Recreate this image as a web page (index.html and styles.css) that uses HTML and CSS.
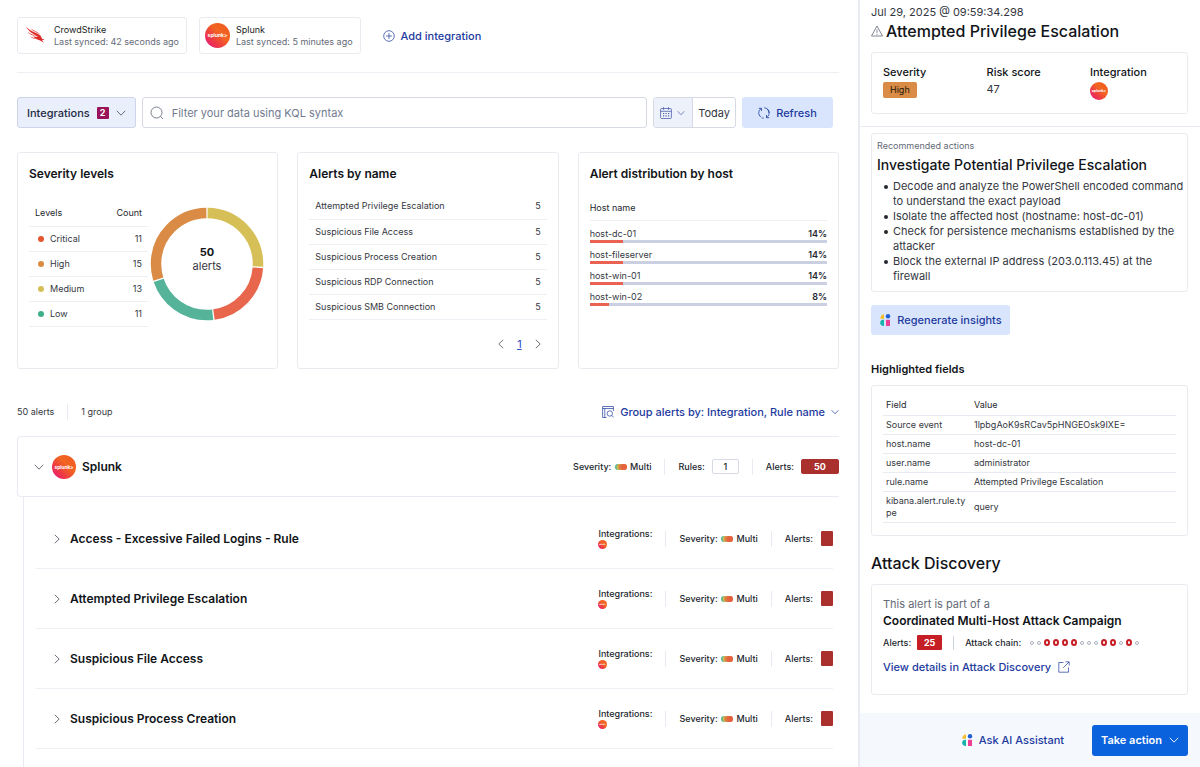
FILE: index.html
```html
<!DOCTYPE html>
<html lang="en">
<head>
<meta charset="utf-8">
<title>Alert summary</title>
<link rel="stylesheet" href="styles.css">
</head>
<body>
<svg class="defs" aria-hidden="true">
  <defs>
    <linearGradient id="splunk-fill" x1="0" y1="1" x2="1" y2="0">
      <stop offset="0" stop-color="#e6128a"/>
      <stop offset="0.32" stop-color="#ee3a44"/>
      <stop offset="0.6" stop-color="#f26522"/>
      <stop offset="1" stop-color="#f0571f"/>
    </linearGradient>
    <symbol id="splunk" viewBox="0 0 24 24">
      <circle cx="12" cy="12" r="12" fill="url(#splunk-fill)"/>
      <text x="12" y="13.500" text-anchor="middle" font-size="4.800" font-weight="700" fill="#fff">splunk&gt;</text>
    </symbol>
    <symbol id="multi" viewBox="0 0 12 6">
      <circle cx="3" cy="3" r="3" fill="#4fb697"/>
      <circle cx="4.500" cy="3" r="3" fill="#d3b654"/>
      <rect x="3.500" y="0" width="8.500" height="6" rx="3" fill="#dd7a42"/>
      <circle cx="9" cy="3" r="3" fill="#e5633f"/>
    </symbol>
    <symbol id="down" viewBox="0 0 10 10"><path d="M.8 2.800 5 7.200 9.200 2.800" fill="none" stroke="currentColor" stroke-width=".9"/></symbol>
    <symbol id="right" viewBox="0 0 10 10"><path d="M2.800 .8 7.200 5 2.800 9.200" fill="none" stroke="currentColor" stroke-width=".9"/></symbol>
    <symbol id="left" viewBox="0 0 10 10"><path d="M7.200 .8 2.800 5 7.200 9.200" fill="none" stroke="currentColor" stroke-width=".9"/></symbol>
    <symbol id="assistant" viewBox="0 0 12 14">
      <path d="M5 1.200v4.600H1.300C1.200 3.500 2.700 1.500 5 1.200z" fill="#f3c02c"/>
      <circle cx="9" cy="3.300" r="2.200" fill="#1f5fd6"/>
      <path d="M5 6.800v6.200H4C.2 12.600.2 7.200 4 6.800z" fill="#17b5ac"/>
      <path d="M7 6.800h4V13H7z" fill="#ee3f94"/>
    </symbol>
  </defs>
</svg>

<div class="layout">
  <main class="main">
    <section class="sources">
      <div class="source">
        <svg class="source-icon" viewBox="0 0 25 25"><g fill="#dd2a26"><path d="M3 3.500c2.500 3.600 7.500 5 11.500 7.300 2.400 1.300 3.800 2.200 4.200 4.200.2 1 .8 1.300 2.700 1.600-.7.500-1.500.6-2.400.4l1.800 2.600c-1.700-.8-2.900-1.800-4.300-2.400-3-.9-5.200-1.800-6-4.300 1.500.9 3 1.200 4.500 1.100C11 11 5.500 9.200 3 3.500z"/><path d="M4.500 8.600c2 1.900 4.300 2.800 6.500 3.500l.5.900C9 12.400 6 11.300 4.500 8.600z"/><path d="M7 13c1.300 1.100 2.800 1.600 4.500 1.900l.6.800C10 15.500 8 14.700 7 13z"/><path d="M7.500 5.500c3.500 1.900 7.500 3.200 10 6.300C14.500 10 10 8.500 7.500 5.500z" opacity=".7"/></g></svg>
        <div><div class="source-name">CrowdStrike</div><div class="source-sync">Last synced: 42 seconds ago</div></div>
      </div>
      <div class="source">
        <svg class="source-icon"><use href="#splunk"/></svg>
        <div><div class="source-name">Splunk</div><div class="source-sync">Last synced: 5 minutes ago</div></div>
      </div>
      <a class="link add" href="#add"><svg class="icon-12" viewBox="0 0 12 12" fill="none" stroke="currentColor" stroke-width=".7"><circle cx="6" cy="6" r="5.300"/><path d="M6 3v6M3 6h6"/></svg>Add integration</a>
    </section>

    <section class="filters">
      <button class="filter-button" type="button">Integrations <span class="count">2</span><svg class="icon-10"><use href="#down"/></svg></button>
      <label class="search">
        <svg class="icon-14" viewBox="0 0 14 14" fill="none" stroke="currentColor" stroke-width=".9"><circle cx="6.500" cy="6.500" r="5.500"/><path d="m10.400 10.400 2.600 2.600"/></svg>
        <input type="text" placeholder="Filter your data using KQL syntax" aria-label="Filter your data using KQL syntax">
      </label>
      <div class="dates">
        <button class="calendar" type="button" aria-label="Date range">
          <svg class="icon-12" viewBox="0 0 12 12" fill="none" stroke="currentColor" stroke-width=".8"><rect x=".6" y="1.500" width="10.800" height="10" rx="1"/><path d="M.6 4.300h10.800M3.500.2v2.600M8.500.2v2.600"/><path d="M3 6.500h6.500M3 8.800h6.500" stroke-width="1.200" stroke-dasharray="1.200 1.300"/></svg>
          <svg class="icon-8"><use href="#down"/></svg>
        </button>
        <button class="today" type="button">Today</button>
      </div>
      <button class="soft refresh" type="button"><svg class="icon-12" viewBox="0 0 12 12" fill="none" stroke="currentColor" stroke-width=".8"><path d="M2.800 10C-.2 7.500.2 3.300 3.300 1.500M.8 1.300h2.700V4M6.300.8c3 .2 5 2.500 4.900 5.200M9.200 2C11.800 4.500 11.600 8.500 8.700 10.500M11.200 10.700H8.500V8M5.700 11.200a5 5 0 0 1-2-.5"/></svg>Refresh</button>
    </section>

    <section class="cards">
      <article class="card">
        <h2>Severity levels</h2>
        <div class="severity">
          <table class="levels">
            <thead><tr><th>Levels</th><th>Count</th></tr></thead>
            <tbody>
              <tr><td><span class="dot critical"></span>Critical</td><td>11</td></tr>
              <tr><td><span class="dot high"></span>High</td><td>15</td></tr>
              <tr><td><span class="dot medium"></span>Medium</td><td>13</td></tr>
              <tr><td><span class="dot low"></span>Low</td><td>11</td></tr>
            </tbody>
          </table>
          <svg class="donut" viewBox="0 0 114 114">
            <g fill="none" stroke-width="10.500" transform="rotate(-90 57 57)">
              <circle cx="57" cy="57" r="51" pathLength="100" stroke="#d6bf57" stroke-dasharray="25.600 74.400" stroke-dashoffset="-.2"/>
              <circle cx="57" cy="57" r="51" pathLength="100" stroke="#e7664c" stroke-dasharray="21.600 78.400" stroke-dashoffset="-26.200"/>
              <circle cx="57" cy="57" r="51" pathLength="100" stroke="#54b399" stroke-dasharray="21.600 78.400" stroke-dashoffset="-48.200"/>
              <circle cx="57" cy="57" r="51" pathLength="100" stroke="#da8b45" stroke-dasharray="29.600 70.400" stroke-dashoffset="-70.200"/>
            </g>
            <text x="57" y="49" class="donut-total">50</text>
            <text x="57" y="63" class="donut-label">alerts</text>
          </svg>
        </div>
      </article>

      <article class="card">
        <h2>Alerts by name</h2>
        <table class="names">
          <tr><td>Attempted Privilege Escalation</td><td>5</td></tr>
          <tr><td>Suspicious File Access</td><td>5</td></tr>
          <tr><td>Suspicious Process Creation</td><td>5</td></tr>
          <tr><td>Suspicious RDP Connection</td><td>5</td></tr>
          <tr><td>Suspicious SMB Connection</td><td>5</td></tr>
        </table>
        <nav class="pager">
          <button type="button" aria-label="Previous page"><svg class="icon-10"><use href="#left"/></svg></button>
          <a href="#page-1">1</a>
          <button type="button" aria-label="Next page"><svg class="icon-10"><use href="#right"/></svg></button>
        </nav>
      </article>

      <article class="card">
        <h2>Alert distribution by host</h2>
        <div class="host-head">Host name</div>
        <div class="host"><span>host-dc-01</span><b>14%</b><div class="bar"><div style="width:14%"></div></div></div>
        <div class="host"><span>host-fileserver</span><b>14%</b><div class="bar"><div style="width:14%"></div></div></div>
        <div class="host"><span>host-win-01</span><b>14%</b><div class="bar"><div style="width:14%"></div></div></div>
        <div class="host"><span>host-win-02</span><b>8%</b><div class="bar"><div style="width:8%"></div></div></div>
      </article>
    </section>

    <div class="summary">
      <span>50 alerts</span><span class="rule"></span><span>1 group</span>
      <button class="link group-by" type="button"><svg class="icon-12" viewBox="0 0 12 12" fill="none" stroke="currentColor" stroke-width=".7"><path d="M4.500 11.500H.6V.5h10.800v4.500M.6 2.500h10.800M2.800 2.500v9"/><circle cx="7.800" cy="7.500" r="2.700"/><path d="m9.800 9.500 2 2"/></svg>Group alerts by: Integration, Rule name<svg class="icon-8"><use href="#down"/></svg></button>
    </div>

    <section class="group">
      <header class="group-head">
        <svg class="icon-10"><use href="#down"/></svg>
        <svg class="group-icon"><use href="#splunk"/></svg>
        <h2>Splunk</h2>
        <div class="stats">
          <span>Severity: <svg class="multi"><use href="#multi"/></svg> Multi</span><span class="rule"></span>
          <span>Rules:</span><span class="number">1</span><span class="rule"></span>
          <span>Alerts:</span><span class="total">50</span>
        </div>
      </header>
      <div class="group-rows">
        <div class="rule-row"><svg class="icon-10"><use href="#right"/></svg><h3>Access - Excessive Failed Logins - Rule</h3>
          <div class="stats"><span class="stack">Integrations:<svg class="mini"><use href="#splunk"/></svg></span><span class="rule"></span><span>Severity: <svg class="multi"><use href="#multi"/></svg> Multi</span><span class="rule"></span><span>Alerts:</span><span class="chip"></span></div></div>
        <div class="rule-row"><svg class="icon-10"><use href="#right"/></svg><h3>Attempted Privilege Escalation</h3>
          <div class="stats"><span class="stack">Integrations:<svg class="mini"><use href="#splunk"/></svg></span><span class="rule"></span><span>Severity: <svg class="multi"><use href="#multi"/></svg> Multi</span><span class="rule"></span><span>Alerts:</span><span class="chip"></span></div></div>
        <div class="rule-row"><svg class="icon-10"><use href="#right"/></svg><h3>Suspicious File Access</h3>
          <div class="stats"><span class="stack">Integrations:<svg class="mini"><use href="#splunk"/></svg></span><span class="rule"></span><span>Severity: <svg class="multi"><use href="#multi"/></svg> Multi</span><span class="rule"></span><span>Alerts:</span><span class="chip"></span></div></div>
        <div class="rule-row"><svg class="icon-10"><use href="#right"/></svg><h3>Suspicious Process Creation</h3>
          <div class="stats"><span class="stack">Integrations:<svg class="mini"><use href="#splunk"/></svg></span><span class="rule"></span><span>Severity: <svg class="multi"><use href="#multi"/></svg> Multi</span><span class="rule"></span><span>Alerts:</span><span class="chip"></span></div></div>
      </div>
    </section>
  </main>

  <aside class="flyout">
    <header class="flyout-head">
      <div class="time">Jul 29, 2025 @ 09:59:34.298</div>
      <h1><svg class="icon-12" viewBox="0 0 12 12" fill="none" stroke="currentColor" stroke-width=".8"><path d="M6 1 11.500 11H.5zM6 4.500v3.300M6 8.800v1"/></svg>Attempted Privilege Escalation</h1>
      <div class="facts">
        <div><h4>Severity</h4><span class="severity-badge">High</span></div>
        <div><h4>Risk score</h4><span class="score">47</span></div>
        <div><h4>Integration</h4><svg class="fact-icon"><use href="#splunk"/></svg></div>
      </div>
    </header>

    <div class="flyout-body">
      <section class="advice">
        <div class="eyebrow">Recommended actions</div>
        <h2>Investigate Potential Privilege Escalation</h2>
        <ul>
          <li>Decode and analyze the PowerShell encoded command to understand the exact payload</li>
          <li>Isolate the affected host (hostname: host-dc-01)</li>
          <li>Check for persistence mechanisms established by the attacker</li>
          <li>Block the external IP address (203.0.113.45) at the firewall</li>
        </ul>
      </section>
      <button class="soft regenerate" type="button"><svg class="ai-icon"><use href="#assistant"/></svg>Regenerate insights</button>

      <h3 class="fields-title">Highlighted fields</h3>
      <div class="fields">
        <table>
          <thead><tr><th>Field</th><th>Value</th></tr></thead>
          <tbody>
            <tr><td>Source event</td><td>1lpbgAoK9sRCav5pHNGEOsk9IXE=</td></tr>
            <tr><td>host.name</td><td>host-dc-01</td></tr>
            <tr><td>user.name</td><td>administrator</td></tr>
            <tr><td>rule.name</td><td>Attempted Privilege Escalation</td></tr>
            <tr><td>kibana.alert.rule.type</td><td>query</td></tr>
          </tbody>
        </table>
      </div>

      <h2 class="attack-title">Attack Discovery</h2>
      <section class="attack">
        <p>This alert is part of a</p>
        <h3>Coordinated Multi-Host Attack Campaign</h3>
        <div class="attack-stats">
          <span>Alerts:</span><span class="attack-count">25</span><span class="rule dark"></span><span>Attack chain:</span>
          <span class="chain"><i></i><i></i><i class="hit"></i><i class="hit"></i><i class="hit"></i><i class="hit"></i><i></i><i></i><i></i><i class="hit"></i><i class="hit"></i><i></i><i class="hit"></i><i></i></span>
        </div>
        <a class="link details" href="#details">View details in Attack Discovery<svg class="icon-12" viewBox="0 0 12 12" fill="none" stroke="currentColor" stroke-width=".7"><path d="M5.500 1.500H.8v9.700h9.700V6.500M7.500.8h3.700v3.700M11 1 5.200 6.800"/></svg></a>
      </section>
    </div>

    <footer class="flyout-foot">
      <button class="link ask" type="button"><svg class="ai-icon"><use href="#assistant"/></svg>Ask AI Assistant</button>
      <button class="primary" type="button">Take action<svg class="icon-10"><use href="#down"/></svg></button>
    </footer>
  </aside>
</div>
</body>
</html>
```

FILE: styles.css
```css
* { box-sizing: border-box; }
body { margin: 0; background: #fff; color: #343741; font: 400 9px/12px Inter, "Liberation Sans", sans-serif; }
h1, h2, h3, h4, p, ul { margin: 0; padding: 0; }
h1, h2, h3, h4 { color: #111418; font-weight: 600; }
button, input { font: inherit; color: inherit; border: 0; background: none; padding: 0; margin: 0; }
button { cursor: pointer; }
svg { display: block; flex: none; }
table { border-collapse: collapse; width: 100%; }
th { font-weight: 400; text-align: left; color: #24272e; }
td, th { padding: 0; }
a { text-decoration: none; }

.defs { position: absolute; width: 0; height: 0; }
.icon-8 { width: 8px; height: 8px; }
.icon-10 { width: 10px; height: 10px; color: #5a606b; }
.icon-12 { width: 12px; height: 12px; }
.icon-14 { width: 14px; height: 14px; }
.link { color: #1d3a9e; display: flex; align-items: center; font-size: 11px; line-height: 16px; font-weight: 500; }
.rule { width: 1px; height: 16px; background: #e8ebf1; }
.rule.dark { background: #ccd2de; height: 14px; }

.layout { display: grid; grid-template-columns: minmax(0, 1fr) 342px; min-height: 100vh; }
.main { padding: 17px 19px 0 17px; display: flex; flex-direction: column; }

.sources { display: flex; align-items: center; gap: 12px; padding-bottom: 18px; border-bottom: 1px solid #eceff3; }
.source { display: flex; align-items: center; gap: 6px; height: 37px; padding: 0 7px 0 5px; border: 1px solid #e8ebf0; border-radius: 3px; }
.source-icon { width: 25px; height: 25px; }
.source-name { color: #1a1c21; }
.source-sync { color: #646a77; }
.add { gap: 6px; margin-left: 10px; }

.filters { display: flex; gap: 6px; height: 31px; margin-top: 24px; padding-right: 6px; font-size: 11px; }
.filter-button { display: flex; align-items: center; gap: 7px; padding: 0 9px; background: #e9effb; border: 1px solid #cdd6e8; border-radius: 3px; color: #1f2a44; font-weight: 500; }
.count { width: 12px; height: 12px; background: #9a1257; color: #fff; font-weight: 700; font-size: 9px; line-height: 12px; text-align: center; border-radius: 1px; }
.search { flex: 1; display: flex; align-items: center; gap: 8px; padding: 0 7px; border: 1px solid #d5dae5; border-radius: 3px; color: #6a7080; }
.search input { flex: 1; min-width: 0; outline: 0; }
.search input::placeholder { color: #717a90; opacity: 1; }
.dates { display: flex; border: 1px solid #d5dae5; border-radius: 3px; overflow: hidden; }
.calendar { display: flex; align-items: center; gap: 5px; padding: 0 7px 0 6px; background: #edf1fa; border-right: 1px solid #d5dae5; color: #4b5fb0; }
.today { padding: 0 5px; }
.soft { display: flex; align-items: center; justify-content: center; gap: 6px; background: #d9e5fd; color: #1d3a9e; border-radius: 3px; font-size: 11px; font-weight: 500; }
.refresh { width: 91px; }

.cards { display: grid; grid-template-columns: repeat(3, minmax(0, 1fr)); gap: 19px; margin-top: 24px; }
.card { border: 1px solid #e8ebf0; border-radius: 3px; padding: 13px 11px; min-height: 217px; display: flex; flex-direction: column; }
.card h2 { font-size: 12px; line-height: 16px; }
.severity { display: flex; justify-content: space-between; margin-top: 19px; padding-right: 2px; }
.levels { width: 119px; }
.levels tr, .names tr { height: 25px; border-bottom: 1px solid #eceff3; }
.levels th:first-child { padding-left: 6px; }
.levels td:first-child { padding-left: 9px; }
.levels th:last-child, .levels td:last-child { text-align: right; padding-right: 6px; }
.dot { display: inline-block; width: 6px; height: 6px; border-radius: 50%; margin-right: 6px; }
.critical { background: #e4572e; }
.high { background: #da8b45; }
.medium { background: #d6bf57; }
.low { background: #3fae8a; }
.donut { width: 114px; height: 114px; margin-top: 6px; }
.donut text { text-anchor: middle; font-size: 11px; fill: #343741; }
.donut .donut-total { font-weight: 700; fill: #111418; }
.names { margin-top: 12px; }
.names td { padding-left: 6px; }
.names td:last-child { text-align: right; padding-right: 6px; }
.pager { display: flex; justify-content: flex-end; align-items: center; gap: 11px; margin-top: 17px; padding-right: 4px; }
.pager a { color: #2a4bc0; font-size: 11px; line-height: 14px; text-decoration: underline; }
.host-head { margin-top: 20px; padding-bottom: 6px; border-bottom: 1px solid #eceff3; margin-bottom: 7px; color: #24272e; }
.host { display: grid; grid-template-columns: 1fr auto; margin-bottom: 6px; }
.host b { font-weight: 600; color: #24272e; }
.bar { grid-column: 1 / -1; height: 3px; background: #cad0e2; }
.bar div { height: 3px; background: #ea6254; }

.summary { display: flex; align-items: center; gap: 13px; margin-top: 35px; }
.group-by { margin-left: auto; gap: 6px; }
.group { margin-top: 16px; flex: 1; display: flex; flex-direction: column; }
.group-head { display: flex; align-items: center; height: 61px; border: 1px solid #e8ebf1; border-right: 0; border-radius: 4px 0 0 4px; padding-left: 16px; }
.group-icon { width: 24px; height: 24px; margin-left: 8px; }
.group-head h2 { font-size: 12px; line-height: 16px; margin-left: 6px; }
.stats { display: flex; align-items: center; gap: 13px; margin-left: auto; color: #24272e; font-weight: 500; }
.stats .number, .stats .total { width: 27px; height: 15px; margin-left: -6px; text-align: center; line-height: 13px; border: 1px solid #d5dae5; border-radius: 2px; }
.stats .total { width: 38px; background: #a9302d; border-color: #a9302d; color: #fff; font-weight: 700; }
.multi { width: 12px; height: 6px; margin: 0 1px; display: inline-block; }
.group-rows { flex: 1; margin-left: 6px; border-left: 1px solid #e8ebf1; padding: 12px 6px 18px 12px; }
.rule-row { display: flex; align-items: center; gap: 8px; height: 60px; padding-left: 16px; border-bottom: 1px solid #eceff3; }
.rule-row h3 { font-size: 12px; line-height: 16px; }
.mini { width: 9px; height: 9px; }
.chip { width: 12px; height: 15px; margin-left: -5px; background: #a9302d; border-radius: 1px; }

.flyout { border-left: 2px solid #e8ebf1; display: flex; flex-direction: column; }
.flyout-head { padding: 5px 12px 12px 11px; border-bottom: 1px solid #e8ebf1; }
.time { font-size: 11px; line-height: 14px; }
h1 { display: flex; align-items: center; gap: 3px; font-size: 16px; line-height: 20px; margin-top: 2px; }
h1, .attack-title, .advice h2, h4 { font-weight: 500; }
h1 svg { color: #646a77; }
.facts { display: grid; grid-template-columns: 1fr 1fr 97px; margin-top: 11px; height: 62px; padding: 12px 0 0 11px; border: 1px solid #e8ebf0; border-radius: 3px; }
.facts > div { display: flex; flex-direction: column; align-items: flex-start; gap: 3px; }
h4 { font-size: 11px; line-height: 14px; }
.severity-badge { background: #da8b45; color: #22180c; padding: 2px 7px; border-radius: 2px; }
.score { font-size: 11px; line-height: 14px; }
.fact-icon { width: 18px; height: 18px; }

.flyout-body { padding: 6px 12px 18px 11px; }
.advice { border: 1px solid #e8ebf0; border-radius: 3px; padding: 5px 0 7px 5px; }
.eyebrow { color: #646a77; line-height: 13px; }
.advice h2 { font-size: 14px; line-height: 18px; margin: 4px 0 5px; }
.advice ul { padding-left: 7px; font-size: 11px; line-height: 15px; list-style: none; }
.advice li { display: flex; gap: 5px; }
.advice li::before { content: ""; flex: none; width: 4px; height: 4px; margin-top: 6px; border-radius: 50%; background: #24272e; }
.regenerate { width: 139px; height: 30px; margin-top: 13px; }
.ai-icon { width: 12px; height: 14px; }
.fields-title { font-size: 11px; line-height: 16px; margin-top: 26px; }
.fields { margin-top: 8px; padding: 10px 11px 12px; border: 1px solid #e8ebf0; border-radius: 3px; }
.fields tr { height: 19px; border-bottom: 1px solid #e8ebf1; }
.fields tr:last-child { height: 31px; }
.fields thead tr:last-child { height: 19px; }
.fields td, .fields th { padding-left: 3px; overflow-wrap: anywhere; }
.fields td:first-child { padding-right: 4px; }
.fields th:first-child { width: 88px; }
.attack-title { font-size: 16px; line-height: 20px; margin-top: 17px; }
.attack { margin-top: 11px; min-height: 111px; padding: 11px; border: 1px solid #e8ebf0; border-radius: 3px; }
.attack p { font-size: 11px; line-height: 16px; color: #646a77; }
.attack h3 { font-size: 12px; line-height: 18px; }
.attack-stats { display: flex; align-items: center; gap: 6px; margin-top: 5px; height: 16px; color: #24272e; font-weight: 500; }
.attack-count { width: 25px; height: 15px; background: #c61e25; color: #fff; font-weight: 700; line-height: 15px; text-align: center; border-radius: 1px; }
.attack-stats .rule { margin: 0 5px; }
.chain { display: flex; align-items: center; gap: 3px; margin-left: 3px; }
.chain i { width: 4px; height: 4px; border: 1px solid #aab0bc; border-radius: 50%; }
.chain .hit { width: 6px; height: 7px; border: 2px solid #c61e25; }
.details { gap: 7px; margin-top: 8px; }

.flyout-foot { margin-top: auto; height: 55px; padding: 0 12px; display: flex; align-items: center; justify-content: flex-end; gap: 28px; background: #f5f9fe; }
.ask { gap: 6px; }
.primary { display: flex; align-items: center; justify-content: center; gap: 7px; width: 96px; height: 31px; background: #0b62dd; color: #fff; border-radius: 3px; font-size: 11px; font-weight: 600; }
.primary svg { color: #fff; }
```
